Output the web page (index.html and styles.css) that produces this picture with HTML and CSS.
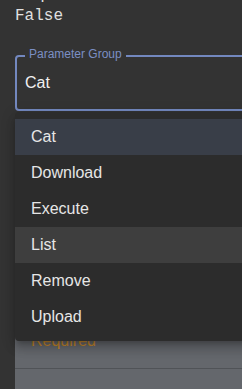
FILE: index.html
```html
<!DOCTYPE html>
<html lang="en">
<head>
    <meta charset="UTF-8">
    <meta name="viewport" content="width=device-width, initial-scale=1.0">
    <title>Parameter Group</title>
    <link rel="stylesheet" href="styles.css">
</head>
<body>

<div class="page">
    <div class="title">Output</div>
    <div class="value">False</div>

    <div class="field">
        <span class="field-label">Parameter Group</span>
        <div class="field-value">Cat</div>
    </div>

    <div class="panel">
        <div class="required">Required</div>
    </div>
    <div class="panel-rest"></div>
</div>

<ul class="menu">
    <li class="selected">Cat</li>
    <li>Download</li>
    <li>Execute</li>
    <li class="hover">List</li>
    <li>Remove</li>
    <li>Upload</li>
</ul>

</body>
</html>
```

FILE: styles.css
```css
html, body {
    margin: 0;
    padding: 0;
}
body {
    background: #333333;
    color: #e6e6e6;
    font-family: "Liberation Sans", Arial, sans-serif;
    overflow: hidden;
    width: 242px;
    height: 389px;
    position: relative;
}
.page {
    padding-left: 15px;
    width: 400px;
}
.title {
    font-size: 16px;
    line-height: 18px;
    margin-top: -15px;
    color: #e6e6e6;
}
.value {
    font-family: "Liberation Mono", "Courier New", monospace;
    font-size: 16px;
    line-height: 18px;
    margin-top: 4px;
    color: #e0e0e0;
}
.field {
    position: relative;
    margin-top: 30px;
    height: 52px;
    border: 2px solid #7388bf;
    border-radius: 4px;
    display: flex;
    align-items: center;
    padding-left: 8px;
}
.field-label {
    position: absolute;
    top: -10px;
    left: 8px;
    padding: 0 4px;
    background: #333333;
    color: #7b8fc4;
    font-size: 12px;
    line-height: 14px;
}
.field-value {
    font-size: 16px;
    color: #f0f0f0;
}
.panel {
    margin-top: 207px;
    background: #64676c;
    padding: 14px 16px 0;
    height: 36px;
    border-bottom: 1px solid #505357;
}
.required {
    color: #c4862a;
    font-size: 16px;
    line-height: 18px;
}
.panel-rest {
    background: #64676c;
    height: 40px;
}
.menu {
    position: absolute;
    top: 112px;
    left: 15px;
    width: 300px;
    margin: 0;
    padding: 7px 0 6px;
    list-style: none;
    background: #2c2c2c;
    border-radius: 4px;
    box-shadow: 0 5px 5px -3px rgba(0, 0, 0, 0.2), 0 8px 10px 1px rgba(0, 0, 0, 0.14), 0 3px 14px 2px rgba(0, 0, 0, 0.12);
}
.menu li {
    height: 36px;
    line-height: 36px;
    padding: 0 16px;
    font-size: 16px;
    color: #e6e6e6;
}
.menu li.selected {
    background: #393e48;
}
.menu li.hover {
    background: #3e3e3e;
}
```
